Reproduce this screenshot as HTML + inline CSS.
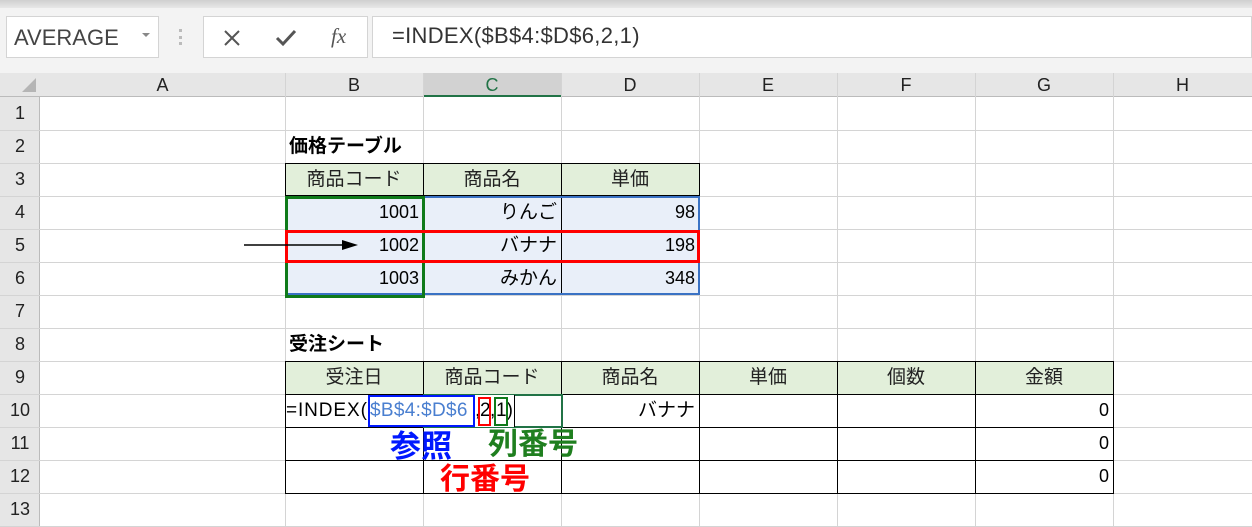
<!DOCTYPE html>
<html><head><meta charset="utf-8"><style>
*{margin:0;padding:0;box-sizing:border-box}
body{width:1252px;height:527px;background:#fff;position:relative;overflow:hidden;font-family:"Liberation Sans","Noto Sans CJK JP",sans-serif}
.a{position:absolute}
.t{position:absolute;font-size:18px;color:#000;white-space:nowrap;line-height:33px}
.h{position:absolute;font-size:18px;color:#222;text-align:center;line-height:24px;top:73px}
.rn{position:absolute;left:0;width:40px;text-align:center;font-size:18px;color:#222;line-height:33px}
</style></head><body>
<div class="a" style="left:0;top:0;width:1252px;height:8px;background:linear-gradient(#d0d0d0,#e8e8e8)"></div>
<div class="a" style="left:0;top:8px;width:1252px;height:65px;background:#f3f3f3"></div>
<div class="a" style="left:6px;top:16px;width:153px;height:42px;background:#fff;border:1px solid #d4d4d4"></div>
<div class="t" style="left:14px;top:23px;font-size:22px;color:#444;line-height:30px">AVERAGE</div>
<div class="a" style="left:142px;top:33px;border-left:4px solid transparent;border-right:4px solid transparent;border-top:4px solid #888"></div>
<div class="a" style="left:179px;top:29px;width:3px;height:16px;border-left:3px dotted #bbb"></div>
<div class="a" style="left:203px;top:16px;width:165px;height:42px;background:#fff;border:1px solid #d4d4d4"></div>
<svg class="a" style="left:222px;top:28px" width="20" height="20"><path d="M3 3L17 17M17 3L3 17" stroke="#555" stroke-width="2"/></svg>
<svg class="a" style="left:275px;top:28px" width="22" height="20"><path d="M2 10L8 16L20 3" stroke="#555" stroke-width="3" fill="none"/></svg>
<div class="a" style="left:331px;top:24px;font-family:'Liberation Serif',serif;font-style:italic;font-size:21px;color:#555">fx</div>
<div class="a" style="left:372px;top:16px;width:880px;height:42px;background:#fff;border:1px solid #d4d4d4"></div>
<div class="t" style="left:392px;top:21px;font-size:22px;color:#333;line-height:30px;letter-spacing:0.3px">=INDEX($B$4:$D$6,2,1)</div>
<div class="a" style="left:0;top:73px;width:1252px;height:24px;background:#e6e6e6;border-bottom:1px solid #bbb"></div>
<div class="a" style="left:0;top:97px;width:40px;height:430px;background:#e6e6e6;border-right:1px solid #bbb"></div>
<div class="a" style="left:423px;top:73px;width:138px;height:24px;background:#d2d2d2;border-bottom:2px solid #217346"></div>
<div class="a" style="left:22px;top:78px;border-left:14px solid transparent;border-bottom:14px solid #b5b5b5"></div>
<div class="h" style="left:40px;width:245px">A</div>
<div class="h" style="left:285px;width:138px">B</div>
<div class="h" style="left:423px;width:138px;color:#217346">C</div>
<div class="h" style="left:561px;width:138px">D</div>
<div class="h" style="left:699px;width:138px">E</div>
<div class="h" style="left:837px;width:138px">F</div>
<div class="h" style="left:975px;width:138px">G</div>
<div class="h" style="left:1113px;width:139px">H</div>
<div id="g"></div>
<script>
var s='';
[285,423,561,699,837,975,1113].forEach(function(x){s+='<div class="a" style="left:'+x+'px;top:73px;width:1px;height:454px;background:#d4d4d4"></div>';});
for(var i=1;i<=13;i++){var y=97+33*i;s+='<div class="a" style="left:0;top:'+y+'px;width:1252px;height:1px;background:#d4d4d4"></div>';
s+='<div class="rn" style="top:'+(97+33*(i-1))+'px">'+i+'</div>';}
document.getElementById('g').innerHTML=s;
</script>
<div class="a" style="left:285px;top:163px;width:415px;height:33px;background:#e2efda;border:1px solid #000"></div>
<div class="a" style="left:423px;top:163px;width:1px;height:132px;background:#000"></div>
<div class="a" style="left:561px;top:163px;width:1px;height:132px;background:#000"></div>
<div class="a" style="left:285px;top:196px;width:415px;height:99px;background:#e9eff9"></div>
<div class="a" style="left:423px;top:196px;width:1px;height:99px;background:#000"></div>
<div class="a" style="left:561px;top:196px;width:1px;height:99px;background:#000"></div>
<div class="a" style="left:285px;top:196px;width:415px;height:99px;border:2px solid #3a72c4"></div>
<div class="a" style="left:285px;top:196px;width:140px;height:102px;border:3px solid #0f7a1a"></div>
<div class="a" style="left:285px;top:230px;width:415px;height:33px;border:3px solid #f00"></div>
<div class="t" style="left:289px;top:130px;font-weight:bold;font-size:19px">価格テーブル</div>
<div class="t" style="left:285px;top:163px;width:138px;text-align:center;color:#222;font-size:19px">商品コード</div>
<div class="t" style="left:423px;top:163px;width:138px;text-align:center;color:#222;font-size:19px">商品名</div>
<div class="t" style="left:561px;top:163px;width:138px;text-align:center;color:#222;font-size:19px">単価</div>
<div class="t" style="left:285px;top:196px;width:134px;text-align:right">1001</div>
<div class="t" style="left:285px;top:229px;width:134px;text-align:right">1002</div>
<div class="t" style="left:285px;top:262px;width:134px;text-align:right">1003</div>
<div class="t" style="left:423px;top:196px;width:134px;text-align:right;font-size:19px">りんご</div>
<div class="t" style="left:423px;top:229px;width:134px;text-align:right;font-size:19px">バナナ</div>
<div class="t" style="left:423px;top:262px;width:134px;text-align:right;font-size:19px">みかん</div>
<div class="t" style="left:561px;top:196px;width:134px;text-align:right">98</div>
<div class="t" style="left:561px;top:229px;width:134px;text-align:right">198</div>
<div class="t" style="left:561px;top:262px;width:134px;text-align:right">348</div>
<svg class="a" style="left:244px;top:238px" width="120" height="14"><line x1="0" y1="7" x2="105" y2="7" stroke="#000" stroke-width="1.5"/><path d="M98 2L114 7L98 12Z" fill="#000"/></svg>
<div class="t" style="left:289px;top:328px;font-weight:bold;font-size:19px">受注シート</div>
<div class="a" style="left:285px;top:361px;width:829px;height:33px;background:#e2efda"></div>
<div class="a" style="left:285px;top:361px;width:829px;height:133px;border:1px solid #000"></div>
<div class="a" style="left:285px;top:394px;width:829px;height:1px;background:#000"></div>
<div class="a" style="left:285px;top:427px;width:829px;height:1px;background:#000"></div>
<div class="a" style="left:285px;top:460px;width:829px;height:1px;background:#000"></div>
<div class="a" style="left:423px;top:361px;width:1px;height:133px;background:#000"></div>
<div class="a" style="left:561px;top:361px;width:1px;height:133px;background:#000"></div>
<div class="a" style="left:699px;top:361px;width:1px;height:133px;background:#000"></div>
<div class="a" style="left:837px;top:361px;width:1px;height:133px;background:#000"></div>
<div class="a" style="left:975px;top:361px;width:1px;height:133px;background:#000"></div>
<div class="a" style="left:424px;top:395px;width:137px;height:32px;background:#fff"></div>
<div class="t" style="left:285px;top:361px;width:138px;text-align:center;color:#222;font-size:19px">受注日</div>
<div class="t" style="left:423px;top:361px;width:138px;text-align:center;color:#222;font-size:19px">商品コード</div>
<div class="t" style="left:561px;top:361px;width:138px;text-align:center;color:#222;font-size:19px">商品名</div>
<div class="t" style="left:699px;top:361px;width:138px;text-align:center;color:#222;font-size:19px">単価</div>
<div class="t" style="left:837px;top:361px;width:138px;text-align:center;color:#222;font-size:19px">個数</div>
<div class="t" style="left:975px;top:361px;width:138px;text-align:center;color:#222;font-size:19px">金額</div>
<div class="t" style="left:561px;top:394px;width:134px;text-align:right;font-size:19px">バナナ</div>
<div class="t" style="left:975px;top:394px;width:134px;text-align:right">0</div>
<div class="t" style="left:975px;top:427px;width:134px;text-align:right">0</div>
<div class="t" style="left:975px;top:460px;width:134px;text-align:right">0</div>
<div class="a" style="left:423px;top:394px;width:140px;height:34px;border:2px solid #217346"></div>
<div class="a" style="left:286px;top:395px;width:229px;height:32px;background:#fff;border-right:1px solid #000"></div>
<div class="t" style="left:286px;top:394px;font-size:19px;letter-spacing:0.9px">=INDEX(</div>
<div class="t" style="left:370px;top:394px;font-size:19px;letter-spacing:0.3px;color:#4a7fd0">$B$4:$D$6</div>
<div class="t" style="left:475px;top:394px;font-size:19px">,</div>
<div class="t" style="left:480px;top:394px;font-size:19px">2</div>
<div class="t" style="left:490px;top:394px;font-size:19px">,</div>
<div class="t" style="left:496px;top:394px;font-size:19px">1)</div>
<div class="a" style="left:368px;top:395px;width:107px;height:32px;border:2px solid #0018ff"></div>
<div class="a" style="left:478px;top:397px;width:13px;height:29px;border:2px solid #f00"></div>
<div class="a" style="left:494px;top:397px;width:14px;height:29px;border:2px solid #0f7a1a"></div>
<div class="t" style="left:390px;top:429px;font-size:31px;font-weight:bold;color:#0018ff;line-height:36px">参照</div>
<div class="t" style="left:488px;top:427px;font-size:30px;font-weight:bold;color:#1f7f1f;line-height:36px">列番号</div>
<div class="t" style="left:440px;top:462px;font-size:30px;font-weight:bold;color:#f00;line-height:36px">行番号</div>
</body></html>
